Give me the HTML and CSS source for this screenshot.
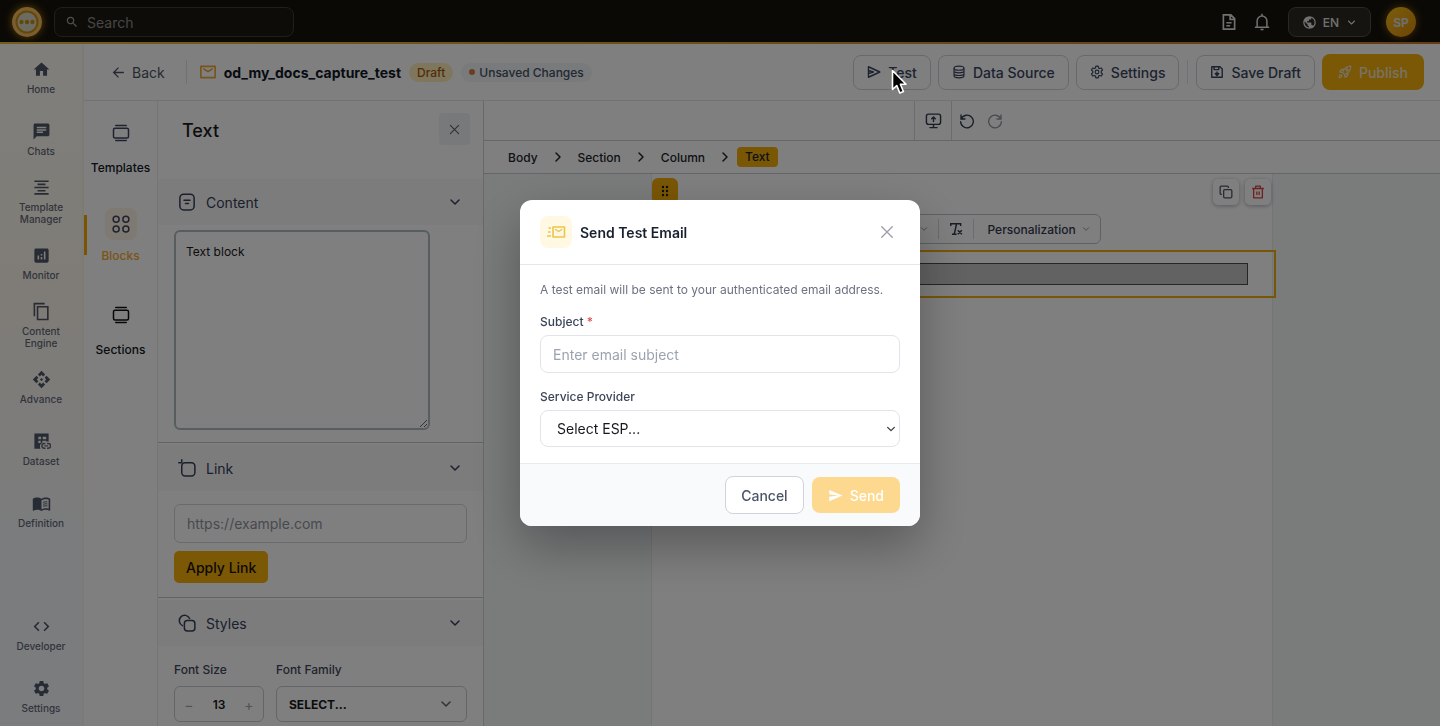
FILE: index.html
```html
<!DOCTYPE html>
<html lang="en">
<head>
<meta charset="utf-8">
<meta name="viewport" content="width=device-width, initial-scale=1">
<title>od_my_docs_capture_test</title>
<link rel="stylesheet" href="styles.css">
</head>
<body>
<svg class="sprite" aria-hidden="true">
  <symbol id="chevron" viewBox="0 0 24 24"><path d="M4 8l8 8 8-8" fill="none" stroke="currentColor" stroke-width="3" stroke-linecap="round" stroke-linejoin="round"/></symbol>
  <symbol id="close" viewBox="0 0 24 24"><path d="M3 3l18 18M21 3L3 21" fill="none" stroke="currentColor" stroke-width="2.400" stroke-linecap="round"/></symbol>
  <symbol id="send" viewBox="0 0 24 24"><path d="M2 3v7l14 2-14 2v7l21-9z" fill="currentColor"/></symbol>
  <symbol id="stack" viewBox="0 0 24 24"><g fill="none" stroke="currentColor" stroke-width="2" stroke-linecap="round"><rect x="2" y="5.500" width="20" height="13" rx="2"/><path d="M5 2h14M5 22h14"/></g></symbol>
  <symbol id="mail" viewBox="0 0 24 24"><path d="M2.500 4.500h19v15h-19zM6.500 8l5.500 3.500L17.500 8" fill="none" stroke="currentColor" stroke-width="2.200" stroke-linejoin="round" stroke-linecap="round"/></symbol>
</svg>

<div class="app">
  <header class="topbar">
    <a class="logo" href="#" aria-label="Home page">
      <svg viewBox="0 0 30 30"><circle cx="15" cy="15" r="15" fill="#f4bd5b"/><circle cx="15" cy="15" r="10.500" fill="#d9d6c0" stroke="#c98f1c" stroke-width="2"/><g fill="#c98f1c"><circle cx="9.500" cy="15" r="2.200"/><circle cx="15" cy="15" r="2.200"/><circle cx="20.500" cy="15" r="2.200"/></g></svg>
    </a>
    <label class="search">
      <svg viewBox="0 0 24 24" fill="currentColor"><path d="M15.500 14h-.79l-.28-.27C15.410 12.590 16 11.110 16 9.500 16 5.910 13.090 3 9.500 3S3 5.910 3 9.500 5.910 16 9.500 16c1.610 0 3.090-.59 4.230-1.570l.27.28v.79l5 4.990L20.490 19l-4.990-5zm-6 0C7.010 14 5 11.990 5 9.500S7.010 5 9.500 5 14 7.010 14 9.500 11.990 14 9.500 14z"/></svg>
      <input type="search" placeholder="Search" aria-label="Search">
    </label>
    <div class="topbar-right">
      <button class="ghost" aria-label="Documents"><svg viewBox="0 0 24 24" fill="none" stroke="currentColor" stroke-width="2.200"><path d="M4.500 2.500h10l5 5v14h-15zM13.500 3v5.500h6M8.500 13h7M8.500 17h5"/></svg></button>
      <button class="ghost" aria-label="Notifications"><svg viewBox="0 0 24 24" fill="none" stroke="currentColor" stroke-width="2"><path d="M2.500 19h19M5.500 19v-8.500a6.500 6.500 0 0 1 13 0V19M12 4V1M10 22h4"/></svg></button>
      <button class="lang"><svg viewBox="0 0 24 24" fill="currentColor"><path d="M12 2C6.480 2 2 6.480 2 12s4.480 10 10 10 10-4.480 10-10S17.520 2 12 2zm-1 17.930c-3.950-.49-7-3.850-7-7.930 0-.62.08-1.210.21-1.790L9 15v1c0 1.100.9 2 2 2v1.930zm6.900-2.540c-.26-.81-1-1.390-1.900-1.390h-1v-3c0-.55-.45-1-1-1H8v-2h2c.55 0 1-.45 1-1V7h2c1.100 0 2-.9 2-2v-.41c2.930 1.190 5 4.060 5 7.410 0 2.080-.8 3.970-2.100 5.390z"/></svg><span>EN</span><svg class="small"><use href="#chevron"/></svg></button>
      <button class="avatar">SP</button>
    </div>
  </header>

  <div class="shell">
    <nav class="sidebar" aria-label="Main">
      <div class="nav-group">
        <a class="nav-item" href="#"><svg viewBox="0 0 24 24"><path d="M10 20v-6h4v6h5v-8h3L12 3 2 12h3v8z"/></svg>Home</a>
        <a class="nav-item" href="#"><svg viewBox="0 0 24 24"><path d="M20 2H4c-1.100 0-1.990.9-1.990 2L2 22l4-4h14c1.100 0 2-.9 2-2V4c0-1.100-.9-2-2-2zM6 9h12v2H6V9zm8 5H6v-2h8v2zm4-6H6V6h12v2z"/></svg>Chats</a>
        <a class="nav-item" href="#"><svg viewBox="0 0 24 24"><path d="M7 15v2h10v-2H7zm-4 6h18v-2H3v2zm0-8h18v-2H3v2zm4-6v2h10V7H7zM3 3v2h18V3H3z"/></svg>Template Manager</a>
        <a class="nav-item" href="#"><svg viewBox="0 0 24 24"><path d="M19 3H5c-1.100 0-2 .9-2 2v14c0 1.100.9 2 2 2h14c1.100 0 2-.9 2-2V5c0-1.100-.9-2-2-2zM9 17H7v-5h2v5zm4 0h-2v-3h2v3zm0-5h-2v-2h2v2zm4 5h-2V7h2v10z"/></svg>Monitor</a>
        <a class="nav-item" href="#"><svg viewBox="0 0 24 24"><path d="M16 1H2v17h2V3h12zM21 5H6v18h15zm-2 16H8V7h11z"/></svg>Content Engine</a>
        <a class="nav-item" href="#"><svg viewBox="0 0 24 24"><path d="M14 12l-2 2-2-2 2-2 2 2zm-2-6l2.120 2.120 2.500-2.500L12 1 7.380 5.620l2.500 2.500L12 6zm-6 6l2.120-2.120-2.500-2.500L1 12l4.620 4.620 2.500-2.500L6 12zm12 0l-2.120 2.120 2.500 2.500L23 12l-4.620-4.620-2.500 2.500L18 12zm-6 6l-2.120-2.120-2.500 2.500L12 23l4.620-4.620-2.500-2.500L12 18z"/></svg>Advance</a>
        <a class="nav-item" href="#"><svg viewBox="0 0 24 24"><path d="M3 2h18v10h-3v-1h-5v2.500c-2 1-3 2.500-3 4.500 0 1 .2 2 .7 3H3zm5 4v3h3.500V6zm5.500 0v3H18V6zM8 11v3h3v-3z" fill-rule="evenodd"/><path d="M17 14.500h-1.500a3 3 0 0 0 0 6H17M19 14.500h1.500a3 3 0 0 1 0 6H19M15.500 17.500h5" fill="none" stroke="currentColor" stroke-width="1.800"/></svg>Dataset</a>
        <a class="nav-item" href="#"><svg viewBox="0 0 24 24"><path d="M21 5c-1.110-.35-2.330-.5-3.500-.5-1.950 0-4.050.4-5.500 1.500-1.450-1.100-3.550-1.500-5.500-1.500S2.450 4.900 1 6v14.650c0 .25.25.5.5.5.1 0 .15-.05.25-.05C3.100 20.450 5.050 20 6.500 20c1.950 0 4.050.4 5.500 1.500 1.350-.85 3.800-1.500 5.500-1.500 1.650 0 3.350.3 4.750 1.050.1.05.15.05.25.05.25 0 .5-.25.5-.5V6c-.6-.45-1.250-.75-2-1zm0 13.500c-1.100-.35-2.300-.5-3.500-.5-1.700 0-4.150.65-5.500 1.500V8c1.350-.85 3.800-1.500 5.500-1.500 1.200 0 2.400.15 3.500.5v11.500z"/><path d="M14 10.500q2.500-1 5.500-.5M14 13q2.500-1 5.500-.5M14 15.500q2.500-1 5.500-.5" fill="none" stroke="currentColor" stroke-width="1.300"/></svg>Definition</a>
      </div>
      <div class="nav-group bottom">
        <a class="nav-item" href="#"><svg viewBox="0 0 24 24"><path d="M9.400 16.600L4.800 12l4.600-4.600L8 6l-6 6 6 6 1.400-1.400zm5.200 0l4.600-4.600-4.600-4.600L16 6l6 6-6 6-1.400-1.400z"/></svg>Developer</a>
        <a class="nav-item" href="#"><svg viewBox="0 0 24 24"><path d="M19.140 12.940c.04-.3.06-.61.06-.94 0-.32-.02-.64-.07-.94l2.030-1.580c.18-.14.23-.41.12-.61l-1.920-3.320c-.12-.22-.37-.29-.59-.22l-2.390.96c-.5-.38-1.030-.7-1.620-.94l-.36-2.540c-.04-.24-.24-.41-.48-.41h-3.840c-.24 0-.43.17-.47.41l-.36 2.540c-.59.24-1.130.57-1.620.94l-2.390-.96c-.22-.08-.47 0-.59.22L2.740 8.870c-.12.21-.08.47.12.61l2.030 1.580c-.05.3-.09.63-.09.94s.02.64.07.94l-2.030 1.580c-.18.14-.23.41-.12.61l1.920 3.320c.12.22.37.29.59.22l2.390-.96c.5.38 1.030.7 1.620.94l.36 2.540c.05.24.24.41.48.41h3.840c.24 0 .44-.17.47-.41l.36-2.540c.59-.24 1.130-.56 1.620-.94l2.390.96c.22.08.47 0 .59-.22l1.920-3.320c.12-.22.07-.47-.12-.61l-2.010-1.580zM12 15.600c-1.980 0-3.600-1.620-3.600-3.600s1.620-3.600 3.600-3.600 3.600 1.620 3.600 3.600-1.620 3.600-3.600 3.600z"/></svg>Settings</a>
      </div>
    </nav>

    <div class="workspace">
      <div class="docbar">
        <button class="back"><svg viewBox="0 0 24 24" fill="none" stroke="currentColor" stroke-width="2.400"><path d="M22 12H4M12 3l-9 9 9 9"/></svg>Back</button>
        <span class="divider tall"></span>
        <svg class="doc-icon"><use href="#mail"/></svg>
        <h1>od_my_docs_capture_test</h1>
        <span class="pill draft">Draft</span>
        <span class="pill unsaved"><i></i>Unsaved Changes</span>
        <div class="actions">
          <button class="btn"><svg viewBox="0 0 24 24" fill="none" stroke="currentColor" stroke-width="2.400" stroke-linejoin="round"><path d="M2.500 3v18L22 12zM2.500 9.500L11 12l-8.500 2.500"/></svg>Test</button>
          <button class="btn"><svg viewBox="0 0 24 24" fill="none" stroke="currentColor" stroke-width="2"><ellipse cx="12" cy="5.500" rx="8.500" ry="3.500"/><path d="M3.500 5.500v13c0 4.600 17 4.600 17 0v-13M3.500 10c0 4.600 17 4.600 17 0M3.500 14.500c0 4.600 17 4.600 17 0"/></svg>Data Source</button>
          <button class="btn"><svg viewBox="0 0 24 24" fill="none" stroke="currentColor" stroke-width="2" stroke-linejoin="round"><path d="M10 2h4l.6 3 2 1.100 2.900-1 2 3.500-2.300 2v2.800l2.300 2-2 3.500-2.900-1-2 1.100-.6 3h-4l-.6-3-2-1.100-2.900 1-2-3.500 2.300-2v-2.800l-2.300-2 2-3.500 2.900 1 2-1.100z"/><circle cx="12" cy="12" r="3.200"/></svg>Settings</button>
          <span class="divider"></span>
          <button class="btn"><svg viewBox="0 0 24 24" fill="none" stroke="currentColor" stroke-width="2.400" stroke-linejoin="round"><path d="M3 3h14l4 4v14H3zM7 4v4h8V4M12 11v6.500M9 14.500h6L12 18z"/></svg>Save Draft</button>
          <button class="btn primary"><svg viewBox="0 0 24 24" fill="none" stroke="currentColor" stroke-width="2" stroke-linejoin="round"><path d="M8 13C10 6 15 2 22 2c0 7-4 12-11 14zM8 13l-5-1c1-3 3-5 7-5M11 16l1 5c3-1 5-3 5-7M2 22c0-3 1-5 3-5s2 2 1 3-2 2-4 2z"/><circle cx="15.500" cy="8.500" r="1.800"/></svg>Publish</button>
        </div>
      </div>

      <div class="editor">
        <nav class="rail" aria-label="Editor">
          <a href="#" class="rail-item"><span class="tile"><svg><use href="#stack"/></svg></span>Templates</a>
          <a href="#" class="rail-item active"><span class="tile"><svg viewBox="0 0 24 24" fill="none" stroke="currentColor" stroke-width="2"><circle cx="5.500" cy="5.500" r="4"/><circle cx="18.500" cy="5.500" r="4"/><circle cx="5.500" cy="18.500" r="4"/><circle cx="18.500" cy="18.500" r="4"/></svg></span>Blocks</a>
          <a href="#" class="rail-item dark"><span class="tile"><svg><use href="#stack"/></svg></span>Sections</a>
        </nav>

        <aside class="panel">
          <div class="panel-head"><h2>Text</h2><button aria-label="Close panel"><svg><use href="#close"/></svg></button></div>
          <section>
            <button class="section-head"><svg viewBox="0 0 24 24" fill="none" stroke="currentColor" stroke-width="2" stroke-linecap="round"><rect x="2.500" y="1.500" width="19" height="21" rx="5"/><path d="M8 9.500h8M10 14h4"/></svg><span>Content</span><svg class="chev"><use href="#chevron"/></svg></button>
            <div class="section-body"><textarea aria-label="Text content">Text block</textarea></div>
          </section>
          <section>
            <button class="section-head"><svg viewBox="0 0 24 24" fill="none" stroke="currentColor" stroke-width="2" stroke-linecap="round"><rect x="5" y="5" width="17.500" height="17.500" rx="4.500"/><path d="M5 1v4M1 5h4"/></svg><span>Link</span><svg class="chev"><use href="#chevron"/></svg></button>
            <div class="section-body link-body"><input type="url" placeholder="https://example.com" aria-label="Link address"><button class="apply">Apply Link</button></div>
          </section>
          <section>
            <button class="section-head"><svg viewBox="0 0 24 24" fill="none" stroke="currentColor" stroke-width="2" stroke-linecap="round"><path d="M6 15.500A7.200 7.200 0 1 1 15.500 6"/><rect x="8.500" y="8.500" width="14" height="14" rx="4"/></svg><span>Styles</span><svg class="chev"><use href="#chevron"/></svg></button>
            <div class="section-body fields">
              <div class="field"><label for="size">Font Size</label><div class="stepper"><button aria-label="Decrease">−</button><input id="size" type="text" value="13"><button aria-label="Increase">+</button></div></div>
              <div class="field grow"><label for="family">Font Family</label><div class="select"><select id="family"><option>SELECT...</option></select><svg><use href="#chevron"/></svg></div></div>
            </div>
          </section>
        </aside>

        <main class="stage">
          <div class="toolbar">
            <div></div>
            <div class="tool-cell"><button aria-label="Preview"><svg viewBox="0 0 24 24" fill="none" stroke="currentColor" stroke-width="2" stroke-linecap="round" stroke-linejoin="round"><rect x="2" y="3" width="20" height="14.500" rx="3"/><path d="M12 18v4M7 22h10M12 13.500V7.500M9.500 9.500L12 7l2.500 2.500"/></svg></button></div>
            <div class="tool-group">
              <button aria-label="Undo"><svg viewBox="0 0 24 24" fill="none" stroke="currentColor" stroke-width="2" stroke-linecap="round"><path d="M3 3v6h6M3.500 8.500A9.500 9.500 0 1 1 2.500 13"/></svg></button>
              <button class="off" aria-label="Redo"><svg viewBox="0 0 24 24" fill="none" stroke="currentColor" stroke-width="2" stroke-linecap="round"><path d="M21 3v6h-6M20.500 8.500A9.500 9.500 0 1 0 21.500 13"/></svg></button>
            </div>
          </div>
          <nav class="crumbs" aria-label="Breadcrumb">
            <a href="#">Body</a><svg><use href="#chevron"/></svg><a href="#">Section</a><svg><use href="#chevron"/></svg><a href="#">Column</a><svg><use href="#chevron"/></svg><a href="#" class="current">Text</a>
          </nav>
          <div class="canvas">
            <div class="page">
              <button class="drag" aria-label="Drag block"><svg viewBox="0 0 8 12" fill="currentColor"><circle cx="2" cy="2" r="1.200"/><circle cx="6" cy="2" r="1.200"/><circle cx="2" cy="6" r="1.200"/><circle cx="6" cy="6" r="1.200"/><circle cx="2" cy="10" r="1.200"/><circle cx="6" cy="10" r="1.200"/></svg></button>
              <div class="block-actions">
                <button aria-label="Duplicate"><svg viewBox="0 0 24 24" fill="none" stroke="currentColor" stroke-width="2.200" stroke-linejoin="round"><rect x="8" y="8" width="14" height="14" rx="2"/><path d="M5 16H3.500Q2 16 2 14.500v-11Q2 2 3.500 2h11Q16 2 16 3.500V5"/></svg></button>
                <button class="danger" aria-label="Delete"><svg viewBox="0 0 24 24" fill="none" stroke="currentColor" stroke-width="2.200" stroke-linejoin="round"><path d="M2 6h20M8 6V2h8v4M4.500 6v16h15V6M10 11v6M14 11v6"/></svg></button>
              </div>
              <div class="format-bar">
                <svg class="chev"><use href="#chevron"/></svg><i></i>
                <button aria-label="Clear formatting"><svg viewBox="0 0 24 24" fill="none" stroke="currentColor" stroke-width="2.400"><path d="M3 7V3h17v4M13 3L9 21M5 21h8M15 14l7 7M22 14l-7 7"/></svg></button><i></i>
                <button class="personal">Personalization<svg class="chev"><use href="#chevron"/></svg></button>
              </div>
              <div class="selected"><div class="text-block"></div></div>
            </div>
          </div>
        </main>
      </div>
    </div>
  </div>
</div>

<div class="overlay">
  <form class="modal" role="dialog" aria-labelledby="dlg-title">
    <div class="modal-head">
      <span class="badge"><svg viewBox="0 0 20 14" fill="none" stroke="currentColor" stroke-linejoin="round"><path d="M7 2h11.500v10H7z" stroke-width="1.600"/><path d="M9.500 4.500l3.200 2 3.200-2" stroke-width="1.400" stroke-linecap="round"/><path d="M2.500 3H5M2 7h2.500M1 11h4" stroke-width="1.600"/></svg></span>
      <h2 id="dlg-title">Send Test Email</h2>
      <button type="button" class="close" aria-label="Close"><svg><use href="#close"/></svg></button>
    </div>
    <div class="modal-body">
      <p>A test email will be sent to your authenticated email address.</p>
      <div class="row"><label for="subject">Subject <b>*</b></label><input id="subject" type="text" placeholder="Enter email subject"></div>
      <div class="row"><label for="esp">Service Provider</label><div class="select"><select id="esp"><option>Select ESP...</option></select><svg><use href="#chevron"/></svg></div></div>
    </div>
    <div class="modal-foot">
      <button type="button" class="cancel">Cancel</button>
      <button type="submit" class="send"><svg><use href="#send"/></svg>Send</button>
    </div>
  </form>
</div>
<svg class="pointer" viewBox="0 0 16 26" aria-hidden="true"><path d="M1.500 1.500v19l4.300-4 3 7.500 3.600-1.500-3-7.200h5.600z" fill="#000" stroke="#fff" stroke-width="1.600" stroke-linejoin="round"/></svg>
</body>
</html>
```
FILE: styles.css
```css
* { box-sizing: border-box; }
body { margin: 0; font-family: Inter, "Liberation Sans", sans-serif; font-size: 14px; color: #1f2937; }
button, input, select, textarea { font: inherit; color: inherit; margin: 0; }
button { display: inline-flex; align-items: center; justify-content: center; padding: 0; border: 0; background: none; cursor: pointer; }
a { color: inherit; text-decoration: none; }
h1, h2, p { margin: 0; }
svg { flex: none; width: 16px; height: 16px; }
.sprite { position: absolute; width: 0; height: 0; }

.app { display: flex; flex-direction: column; height: 100vh; overflow: hidden; background: #fff; }

.topbar { display: flex; align-items: center; flex: none; height: 44px; padding: 0 24px 0 12px; background: linear-gradient(90deg, #e2bd3c, #c97a28) bottom / 100% 2px no-repeat, #15120b; color: #e2e2e2; }
.logo { display: flex; border-radius: 50%; box-shadow: 0 0 8px #b87d10; }
.logo svg { width: 30px; height: 30px; }
.search { display: flex; align-items: center; gap: 8px; width: 240px; height: 30px; margin-left: 12px; padding: 0 10px; border: 1px solid #453e2a; border-radius: 8px; background: #1c1910; color: #a3a3a3; }
.search svg { width: 14px; height: 14px; }
.search input { width: 100%; padding: 0; border: 0; outline: 0; background: none; }
.search input::placeholder { color: #8c8c8c; }
.topbar-right { display: flex; align-items: center; gap: 15px; margin-left: auto; }
.ghost svg { width: 18px; height: 18px; }
.lang { gap: 6px; height: 30px; margin-left: 2px; padding: 0 14px 0 13px; border: 1px solid #55503f; border-radius: 8px; background: #2b2820; font-size: 12px; font-weight: 500; }
.lang svg { width: 15px; height: 15px; }
.lang .small { width: 9px; height: 9px; margin-left: 2px; }
.avatar { width: 30px; height: 30px; border-radius: 50%; background: linear-gradient(135deg, #f5bd18, #dc8a0c); color: #dedede; font-size: 12px; font-weight: 700; box-shadow: 0 0 8px #8a5d0c; }

.shell { display: flex; flex: 1; min-height: 0; }
.sidebar { display: flex; flex-direction: column; justify-content: space-between; flex: none; width: 84px; padding-top: 2px; border-right: 2px solid #faf3e8; background: linear-gradient(180deg, #fffdf6, #fff9ee 35%, #f5f8fc 78%, #f6f8fc); }
.nav-item { display: flex; flex-direction: column; align-items: center; justify-content: center; gap: 4px; height: 62px; padding: 0 14px; font-size: 10px; line-height: 12px; text-align: center; color: #64697a; font-weight: 500; }
.nav-item svg { width: 19px; height: 19px; fill: #4f5668; }
.bottom .nav-item { padding-top: 2px; }

.workspace { display: flex; flex-direction: column; flex: 1; min-width: 0; }
.docbar { display: flex; align-items: center; flex: none; height: 57px; padding: 0 16px 0 28px; border-bottom: 1px solid #e2e4e8; white-space: nowrap; }
.back { gap: 7px; color: #4b5565; }
.back svg { width: 13px; height: 13px; }
.divider { width: 1px; height: 24px; margin: 0 1px; background: #e0e3e8; }
.tall { margin: 0 12px 0 21px; }
.doc-icon { width: 18px; height: 18px; color: #eda93a; }
h1 { margin-left: 7px; font-size: 14px; font-weight: 700; color: #111827; }
.pill { display: inline-flex; align-items: center; height: 19px; margin-left: 8px; padding: 0 8px; border-radius: 10px; font-size: 12px; font-weight: 500; }
.draft { background: #fdeebb; color: #a8590a; }
.unsaved { gap: 4px; background: #f1f4f7; color: #475165; }
.unsaved i { width: 6px; height: 6px; border-radius: 50%; background: #d97c40; }
.actions { display: flex; align-items: center; gap: 7px; margin-left: auto; }
.btn { gap: 7px; height: 35px; padding: 0 13px; border: 1px solid #cfd4db; border-radius: 8px; font-weight: 500; color: #3a4560; }
.btn svg { width: 14px; height: 14px; }
.primary { height: 36px; padding: 0 16px; border: 0; background: #f7b00c; color: #f0e6cf; }

.editor { display: flex; flex: 1; min-height: 0; }
.rail { display: flex; flex-direction: column; flex: none; width: 74px; padding-top: 16px; border-right: 1px solid #ebebee; }
.rail-item { display: flex; flex-direction: column; align-items: center; gap: 10px; height: 91px; font-size: 12px; line-height: 17px; font-weight: 500; color: #111827; }
.tile { display: grid; place-items: center; width: 32px; height: 32px; border-radius: 8px; color: #3e465c; }
.tile svg { width: 18px; height: 18px; }
.active { gap: 7px; color: #f7a92d; background: linear-gradient(#f5a800, #f5a800) 0 7px / 3px 40px no-repeat; }
.active .tile { background: #fdf5e6; }
.dark .tile { color: #101010; }

.panel { flex: none; width: 326px; border-right: 1px solid #cfd2d4; overflow: hidden; }
.panel-head { display: flex; justify-content: space-between; height: 78px; padding: 12px 13px 0 24px; }
.panel-head h2 { font-size: 18px; line-height: 36px; font-weight: 500; color: #1b1b20; }
.panel-head button { width: 31px; height: 32px; border-radius: 4px; background: #eff3f6; color: #5c6470; }
.panel-head svg { width: 11px; height: 11px; }
.panel section + section { padding-top: 2px; border-top: 1px solid #c3c8c9; }
.section-head { width: 100%; height: 46px; padding: 0 22px 0 20px; background: #f8f8f9; color: #37405a; }
.section-head span { flex: 1; margin-left: 10px; text-align: left; }
.section-head svg { width: 18px; height: 18px; }
.section-head .chev { width: 12px; height: 12px; }
.section-body { padding: 5px 16px 12px; }
textarea { display: block; width: 256px; height: 200px; padding: 12px 10px; border: 2px solid #acbcc1; border-radius: 6px; background: none; font-size: 12px; line-height: 16px; color: #18181b; outline: 0; }
.link-body { padding: 13px 16px 14px; }
.link-body input { display: block; width: 100%; height: 39px; padding: 0 12px; border: 1px solid #d2d5da; border-radius: 6px; background: none; }
.link-body input::placeholder { color: #8f949e; opacity: 1; }
.apply { height: 32px; margin-top: 8px; padding: 0 12px; border-radius: 5px; background: #f7b00c; font-weight: 500; color: #1a1405; }
.fields { display: flex; gap: 12px; padding-top: 16px; }
.field label { display: block; margin-bottom: 8px; font-size: 12px; line-height: 16px; font-weight: 500; color: #3f485a; }
.field { width: 90px; }
.grow { flex: 1; }
.stepper, .field .select { display: flex; align-items: center; height: 36px; border: 1px solid #c7cbd1; border-radius: 6px; }
.stepper button { flex: none; width: 28px; color: #a0a4ab; }
.stepper input { flex: 1; min-width: 0; width: 0; padding: 0; border: 0; background: none; text-align: center; font-size: 12px; font-weight: 600; color: #18181b; }
.select { position: relative; }
.select select { appearance: none; width: 100%; height: 100%; border: 0; background: none; outline: 0; }
.select svg { position: absolute; right: 14px; width: 12px; height: 12px; color: #606570; pointer-events: none; }
.field select { padding: 0 12px; font-size: 12px; font-weight: 700; color: #18181b; }

.stage { display: flex; flex-direction: column; flex: 1; min-width: 0; }
.toolbar { display: grid; grid-template-columns: 45% 38px 1fr; flex: none; height: 40px; border-bottom: 1px solid #c9ced3; color: #303a4f; }
.tool-cell { display: grid; place-items: center; border: solid #d5d8dc; border-width: 0 1px; }
.tool-cell svg { width: 17px; height: 17px; }
.tool-group { display: flex; align-items: center; gap: 12px; padding-left: 7px; }
.off { color: #92969e; }
.crumbs { display: flex; align-items: center; flex: none; height: 33px; padding-left: 24px; border-bottom: 1px solid #c9ced3; font-size: 12px; font-weight: 500; color: #20242c; }
.crumbs svg { width: 12px; height: 12px; margin: 0 14px; transform: rotate(-90deg); }
.crumbs .current { margin-left: -8px; padding: 2px 8px; border-radius: 4px; background: #f5ae0a; line-height: 16px; }
.canvas { display: flex; justify-content: center; flex: 1; min-height: 0; background: #f4f8f9; }
.page { position: relative; width: 65%; padding-top: 76px; border: solid #e7eaee; border-width: 0 1px; background: #fff; }
.drag { position: absolute; top: 4px; left: 0; width: 26px; height: 26px; border-radius: 6px; background: #f5ae0a; color: #20180a; }
.drag svg { width: 8px; height: 12px; }
.block-actions { position: absolute; top: 5px; right: 1px; display: flex; gap: 6px; }
.block-actions button { width: 26px; height: 26px; border-radius: 5px; background: #fff; color: #4d5564; box-shadow: 0 1px 4px #a9adb3; }
.block-actions svg { width: 14px; height: 14px; }
.block-actions .danger { color: #d8433c; }
.format-bar { position: absolute; top: 40px; right: 171px; display: flex; align-items: center; gap: 10px; width: 400px; height: 30px; padding: 0 10px; justify-content: flex-end; border: 1px solid #bcc1cb; border-radius: 6px; background: #fff; color: #313950; }
.format-bar i { width: 1px; height: 20px; background: #d5d8de; }
.format-bar .chev { width: 8px; height: 8px; color: #9197a2; }
.format-bar button svg { width: 14px; height: 14px; }
.personal { gap: 6px; padding-left: 3px; font-size: 12px; font-weight: 500; }
.format-bar .personal .chev { width: 8px; height: 8px; }
.selected { margin: 0 -4px 0 -1px; padding: 11px 26px; border: 2px solid #efac0c; }
.text-block { height: 22px; border: 1px solid #4c4c4c; background: #c5c5c5; }

.overlay { position: fixed; inset: 0; display: flex; align-items: center; justify-content: center; background: rgba(0, 0, 0, .5); }
.modal { width: 400px; max-width: 100%; border-radius: 12px; overflow: hidden; background: #fff; box-shadow: 0 20px 50px rgba(0, 0, 0, .3); }
.modal-head { display: flex; align-items: center; height: 65px; padding: 0 26px 0 20px; border-bottom: 1px solid #e3e6ea; }
.badge { display: grid; place-items: center; width: 32px; height: 32px; border-radius: 8px; background: #fff8e3; color: #edc44b; }
.badge svg { width: 20px; height: 14px; }
.modal-head h2 { margin-left: 8px; font-size: 14px; font-weight: 600; color: #18202f; }
.close { margin-left: auto; color: #9aa1ac; }
.close svg { width: 14px; height: 14px; }
.modal-body { padding: 16px 20px; }
.modal-body p { font-size: 12px; line-height: 18px; color: #6b7280; }
.row { margin-top: 15px; }
.row + .row { margin-top: 16px; }
.row label { display: block; margin-bottom: 5px; font-size: 12px; line-height: 16px; font-weight: 500; color: #3b4557; }
.row b { color: #e05252; font-weight: 500; }
.row input, .row .select { display: flex; align-items: center; width: 100%; height: 38px; border: 1px solid #e1e5ea; border-radius: 8px; background: #fff; }
.row .select { height: 37px; }
.row input { padding: 0 12px; outline: 0; }
.row input::placeholder { color: #9ca3af; opacity: 1; }
.row select { padding: 0 16px; color: #15181d; }
.row .select svg { right: 3px; width: 10px; height: 10px; color: #33373e; }
.modal-foot { display: flex; align-items: center; justify-content: flex-end; gap: 8px; height: 63px; padding: 0 20px; border-top: 1px solid #e7eaee; background: #f9fafc; }
.cancel { height: 38px; padding: 0 15px; border: 1px solid #cfd4dc; border-radius: 8px; color: #4b5567; font-weight: 500; background: #fff; }
.send { gap: 7px; height: 36px; padding: 0 16px; border-radius: 8px; background: #fdd990; color: #fff; font-weight: 500; }
.send svg { width: 15px; height: 15px; }
.pointer { position: fixed; top: 69px; right: 533px; width: 16px; height: 26px; }
```
